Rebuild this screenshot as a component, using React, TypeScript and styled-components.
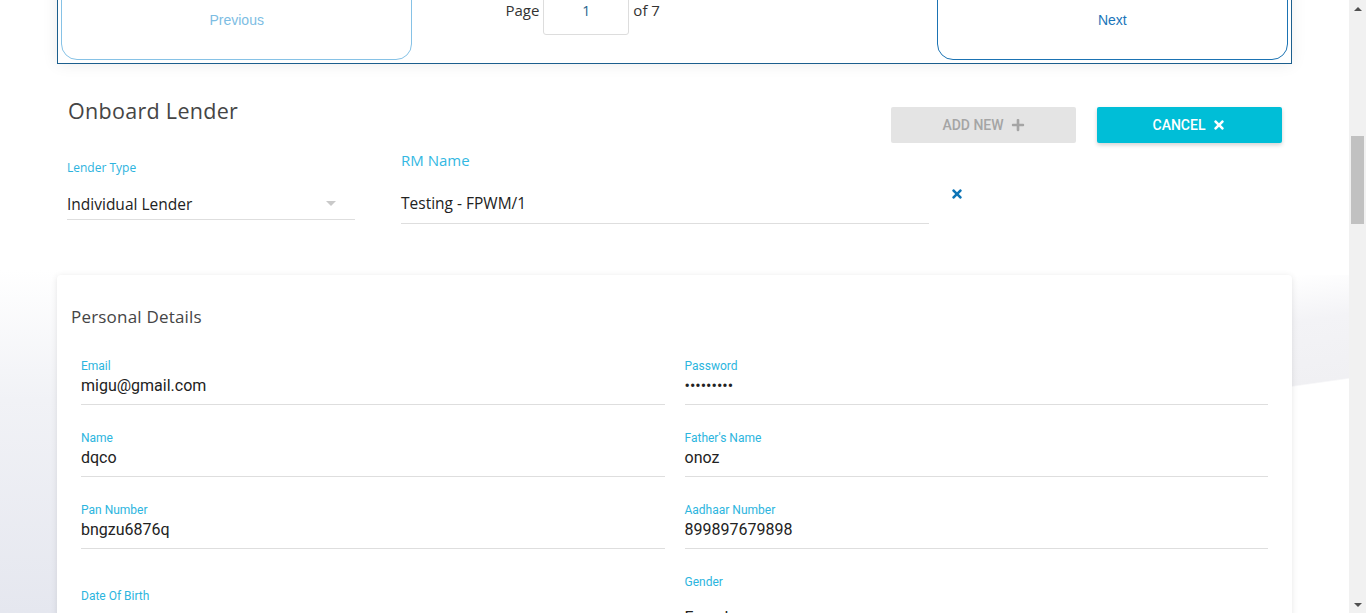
import React from "react";
import styled, { createGlobalStyle } from "styled-components";
import { FaPlus, FaTimes } from "react-icons/fa";

const GlobalStyle = createGlobalStyle`
  html, body { margin: 0; padding: 0; height: 100%; overflow: hidden; background: #ffffff; }
  * { box-sizing: border-box; }
`;

const Screen = styled.div`
  display: flex;
  width: 1366px;
  height: 613px;
  overflow: hidden;
`;

const Viewport = styled.main`
  flex: 1;
  height: 613px;
  overflow: hidden;
  padding: 0 57px 0 57px;
  background:
    linear-gradient(172deg, rgba(255,255,255,0) 0%, #f3f3f6 30%, #f0f0f3 70%, rgba(255,255,255,0) 71%) right 0 top 275px / 57px 150px no-repeat,
    linear-gradient(180deg, #ffffff 0px, #ffffff 270px, #f1f2f6 400px, #e5e7ef 613px) left top / 57px 100% no-repeat,
    #ffffff;
`;

const Pagination = styled.div`
  display: flex;
  margin-top: -24px;
  padding: 3px;
  border: 1px solid #1c5f8e;
  background: #ffffff;
  box-shadow: 0 0 15px 0 rgba(0, 0, 0, 0.08);
`;

const PageButton = styled.div<{ $tone: "light" | "dark" }>`
  flex: 1 1 0;
  min-width: 0;
  height: 80px;
  display: flex;
  align-items: center;
  justify-content: center;
  border: 1px solid ${(p) => (p.$tone === "light" ? "#86c2e6" : "#1b73b3")};
  border-radius: 16px;
  color: ${(p) => (p.$tone === "light" ? "#7dbde3" : "#1a75ba")};
  font-family: "Liberation Sans", Arial, sans-serif;
  font-size: 14px;
  background: #ffffff;
`;

const PageCenter = styled.div`
  flex: 1.5 1 0;
  min-width: 0;
  display: flex;
  justify-content: flex-start;
  align-items: flex-start;
  padding-top: 5px;
`;

const PageInfo = styled.div`
  display: flex;
  align-items: center;
  gap: 4px;
  margin-left: 93px;
  font-family: "Open Sans", "Noto Sans", sans-serif;
  font-size: 15px;
  color: #333333;
`;

const PageInput = styled.div`
  width: 86px;
  height: 50px;
  border: 1px solid #dddddd;
  border-radius: 3px;
  display: flex;
  align-items: center;
  justify-content: center;
  color: #1f5f8c;
  font-family: "Open Sans", "Noto Sans", sans-serif;
  font-size: 14px;
`;

const Header = styled.div`
  display: flex;
  justify-content: space-between;
  align-items: flex-start;
  padding: 0 10px 0 11px;
`;

const Title = styled.h1`
  margin: 34px 0 0;
  font-family: "Open Sans", "Noto Sans", sans-serif;
  font-weight: 400;
  font-size: 21.5px;
  line-height: 26px;
  color: #454545;
  letter-spacing: 0.3px;
`;

const Actions = styled.div`
  display: flex;
  gap: 21px;
  margin-top: 43px;
`;

const ActionButton = styled.div<{ $variant: "disabled" | "primary" }>`
  width: 185px;
  height: 36px;
  display: flex;
  align-items: center;
  justify-content: center;
  gap: 7px;
  border-radius: 2px;
  font-family: Roboto, "Liberation Sans", sans-serif;
  font-weight: 500;
  font-size: 14px;
  text-transform: uppercase;
  background: ${(p) => (p.$variant === "primary" ? "#00bed7" : "#e4e4e4")};
  color: ${(p) => (p.$variant === "primary" ? "#ffffff" : "#a5a5a5")};
  box-shadow: ${(p) =>
    p.$variant === "primary" ? "0 2px 4px rgba(0,0,0,0.18)" : "none"};
  svg { font-size: 14px; }
`;

const LenderRow = styled.div`
  display: flex;
  align-items: flex-start;
  margin-top: 7px;
  padding-left: 10px;
`;

const LenderTypeField = styled.div`
  width: 288px;
  margin-top: 10px;
  margin-right: 46px;
`;

const SmallLabel = styled.div`
  font-family: "Open Sans", "Noto Sans", sans-serif;
  font-size: 12px;
  line-height: 16px;
  color: #2cb3de;
`;

const SelectBox = styled.div`
  margin-top: 12px;
  height: 32px;
  display: flex;
  align-items: center;
  justify-content: space-between;
  padding-right: 19px;
  border-bottom: 1px solid #dedede;
  font-family: "Open Sans", "Noto Sans", sans-serif;
  font-size: 15.5px;
  color: #222222;
`;

const Caret = styled.span`
  width: 0;
  height: 0;
  border-left: 5px solid transparent;
  border-right: 5px solid transparent;
  border-top: 5px solid #c9c9c9;
`;

const RmField = styled.div`
  width: 528px;
`;

const RmLabel = styled.div`
  font-family: "Open Sans", "Noto Sans", sans-serif;
  font-size: 15px;
  line-height: 20px;
  color: #33b8e2;
`;

const RmValue = styled.div`
  margin-top: 12px;
  height: 42px;
  display: flex;
  align-items: center;
  border-bottom: 1px solid #dedede;
  font-family: "Open Sans", "Noto Sans", sans-serif;
  font-size: 15.5px;
  color: #222222;
`;

const ClearIcon = styled.span`
  margin: 37px 0 0 21px;
  color: #0d74b6;
  font-size: 14px;
  display: flex;
`;

const Card = styled.section`
  margin-top: 51px;
  background: #ffffff;
  border-radius: 4px;
  box-shadow: 0 1px 6px rgba(0, 0, 0, 0.1);
  padding: 30px 14px 40px;
`;

const CardTitle = styled.h2`
  margin: 0;
  font-family: "Open Sans", "Noto Sans", sans-serif;
  font-weight: 400;
  font-size: 17px;
  line-height: 24px;
  color: #454545;
  letter-spacing: 0.2px;
`;

const FieldGrid = styled.div`
  display: grid;
  grid-template-columns: 1fr 1fr;
  column-gap: 20px;
  row-gap: 26px;
  margin: 30px 10px 0;
`;

const Field = styled.div<{ $offset?: number }>`
  margin-top: ${(p) => p.$offset ?? 0}px;
`;

const FieldLabel = styled.div`
  font-family: Roboto, "Liberation Sans", sans-serif;
  font-size: 12px;
  line-height: 14px;
  color: #2cb5de;
`;

const FieldValue = styled.div<{ $pad?: number }>`
  margin-top: ${(p) => p.$pad ?? 3}px;
  height: 29px;
  line-height: 20px;
  padding-bottom: 8px;
  border-bottom: 1px solid #dedede;
  font-family: Roboto, "Liberation Sans", sans-serif;
  font-size: 16px;
  color: #222222;
`;

const Scrollbar = styled.div`
  width: 17px;
  height: 613px;
  background: #f1f1f1;
  display: flex;
  flex-direction: column;
  align-items: center;
`;

const Arrow = styled.div<{ $dir: "up" | "down" }>`
  height: 17px;
  width: 17px;
  display: flex;
  align-items: center;
  justify-content: center;
  &::before {
    content: "";
    border-left: 4px solid transparent;
    border-right: 4px solid transparent;
    ${(p) =>
      p.$dir === "up"
        ? "border-bottom: 4px solid #505050;"
        : "border-top: 4px solid #505050;"}
  }
`;

const Track = styled.div`
  flex: 1;
  width: 100%;
  display: flex;
  flex-direction: column;
  align-items: center;
`;

const Thumb = styled.div`
  margin-top: 119px;
  width: 13px;
  height: 88px;
  background: #c1c1c1;
`;

const fields: { label: string; value: string; offset?: number; pad?: number }[] = [
  { label: "Email", value: "migu@gmail.com" },
  { label: "Password", value: "•••••••••" },
  { label: "Name", value: "dqco" },
  { label: "Father's Name", value: "onoz" },
  { label: "Pan Number", value: "bngzu6876q" },
  { label: "Aadhaar Number", value: "899897679898" },
  { label: "Date Of Birth", value: "", offset: 14 },
  { label: "Gender", value: "Female", pad: 19 },
];

export default function App() {
  return (
    <>
      <GlobalStyle />
      <Screen>
        <Viewport>
          <Pagination>
            <PageButton $tone="light">Previous</PageButton>
            <PageCenter>
              <PageInfo>
                Page <PageInput>1</PageInput> of 7
              </PageInfo>
            </PageCenter>
            <PageButton $tone="dark">Next</PageButton>
          </Pagination>

          <Header>
            <Title>Onboard Lender</Title>
            <Actions>
              <ActionButton $variant="disabled">
                Add New <FaPlus />
              </ActionButton>
              <ActionButton $variant="primary">
                Cancel <FaTimes />
              </ActionButton>
            </Actions>
          </Header>

          <LenderRow>
            <LenderTypeField>
              <SmallLabel>Lender Type</SmallLabel>
              <SelectBox>
                Individual Lender <Caret />
              </SelectBox>
            </LenderTypeField>
            <RmField>
              <RmLabel>RM Name</RmLabel>
              <RmValue>Testing - FPWM/1</RmValue>
            </RmField>
            <ClearIcon>
              <FaTimes />
            </ClearIcon>
          </LenderRow>

          <Card>
            <CardTitle>Personal Details</CardTitle>
            <FieldGrid>
              {fields.map((f) => (
                <Field key={f.label} $offset={f.offset}>
                  <FieldLabel>{f.label}</FieldLabel>
                  <FieldValue $pad={f.pad}>{f.value}</FieldValue>
                </Field>
              ))}
            </FieldGrid>
          </Card>
        </Viewport>
        <Scrollbar>
          <Arrow $dir="up" />
          <Track>
            <Thumb />
          </Track>
          <Arrow $dir="down" />
        </Scrollbar>
      </Screen>
    </>
  );
}
